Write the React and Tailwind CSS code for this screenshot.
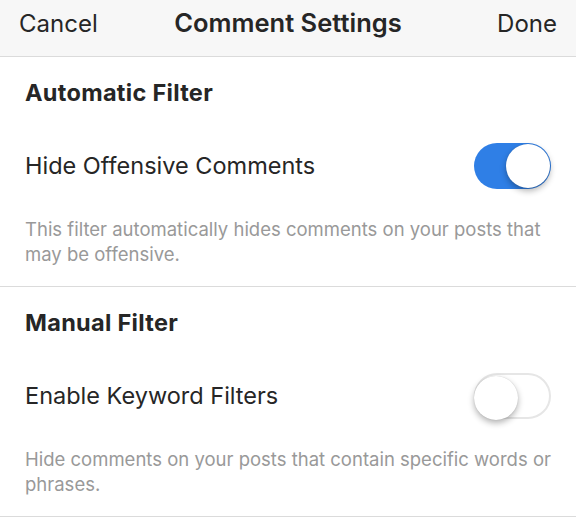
import React from 'react';

function Toggle({ on }) {
  return (
    <div
      className={`relative w-[77px] h-[46px] rounded-full shrink-0 ${
        on ? 'bg-[#2f7fe6]' : 'bg-white border-2 border-[#e6e6e6]'
      }`}
    >
      <div
        className={`absolute top-[1px] w-[44px] h-[44px] rounded-full bg-white shadow-[0_3px_6px_rgba(0,0,0,0.3),0_0_1px_rgba(0,0,0,0.2)] ${
          on ? 'right-[1px]' : '-left-[2px] -top-[1px]'
        }`}
      />
    </div>
  );
}

function Section({ title, label, on, desc }) {
  return (
    <div className="border-b border-[#dbdbdb]">
      <div className="h-[72px] flex items-center px-[25px] text-[23.5px] font-bold tracking-[0.3px] text-[#262626]">
        {title}
      </div>
      <div className="h-[74px] flex items-center justify-between pl-[25px] pr-[25px]">
        <span className="text-[23.5px] text-[#262626]">{label}</span>
        <Toggle on={on} />
      </div>
      <p className="pt-[14px] pb-[19px] px-[25px] text-[18.5px] leading-[25px] text-[#999999]">
        {desc}
      </p>
    </div>
  );
}

export default function App() {
  return (
    <div
      className="w-[576px] h-[521px] bg-white overflow-hidden"
      style={{ fontFamily: 'Inter, "Noto Sans", sans-serif' }}
    >
      <div className="h-[57px] bg-[#f7f7f7] border-b border-[#dbdbdb] grid grid-cols-[1fr_auto_1fr] items-center px-[19px] pb-[9px] text-[24px] text-[#262626]">
        <span>Cancel</span>
        <span className="text-[25.5px] font-semibold">Comment Settings</span>
        <span className="justify-self-end">Done</span>
      </div>
      <Section
        title="Automatic Filter"
        label="Hide Offensive Comments"
        on
        desc="This filter automatically hides comments on your posts that may be offensive."
      />
      <Section
        title="Manual Filter"
        label="Enable Keyword Filters"
        on={false}
        desc="Hide comments on your posts that contain specific words or phrases."
      />
    </div>
  );
}
